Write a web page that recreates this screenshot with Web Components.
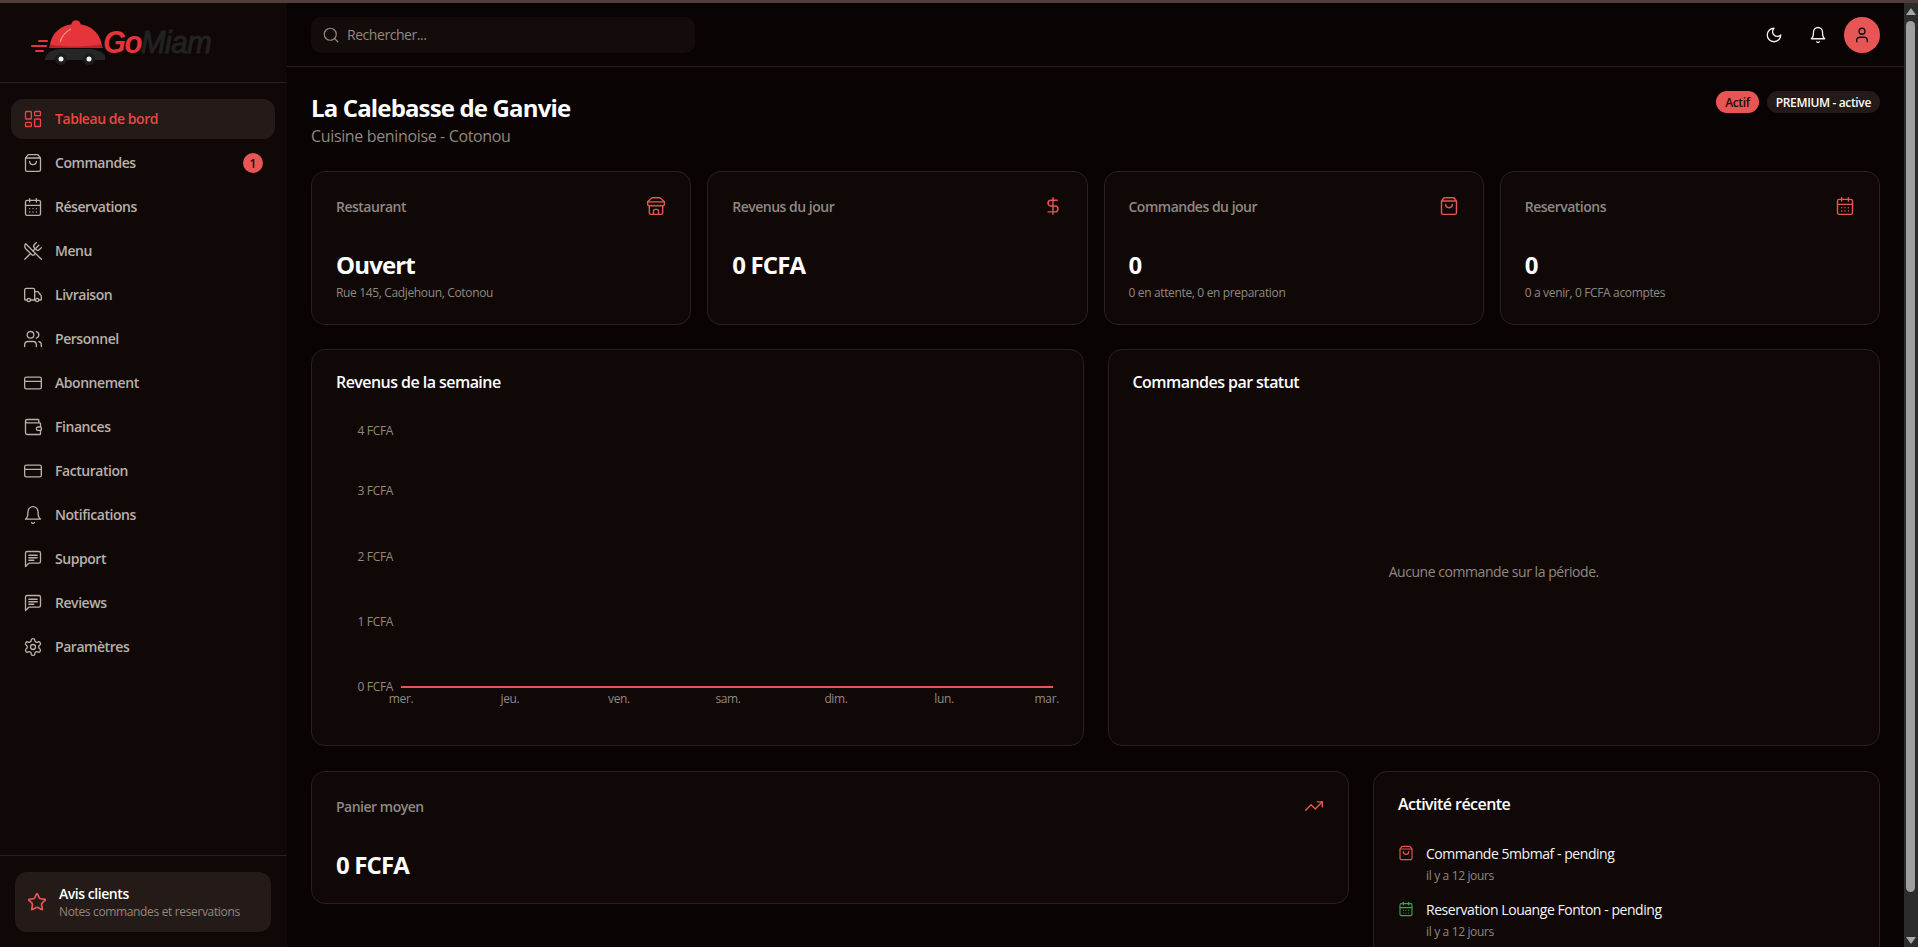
<!DOCTYPE html>
<html lang="fr">
<head>
<meta charset="utf-8">
<title>GoMiam</title>
<style>
  html, body { margin: 0; height: 100%; overflow: hidden; background: #0a0303; }
</style>
</head>
<body>
<app-shell></app-shell>
<script>
const ICONS = {
    dashboard: '<rect x="3" y="3" width="7" height="9" rx="1"/><rect x="14" y="3" width="7" height="5" rx="1"/><rect x="14" y="12" width="7" height="9" rx="1"/><rect x="3" y="16" width="7" height="5" rx="1"/>',
    bag: '<path d="M16 10a4 4 0 0 1-8 0"/><path d="M3.103 6.034h17.794"/><path d="M3.4 5.467a2 2 0 0 0-.4 1.2V20a2 2 0 0 0 2 2h14a2 2 0 0 0 2-2V6.667a2 2 0 0 0-.4-1.2l-2-2.667A2 2 0 0 0 17 2H7a2 2 0 0 0-1.6.8z"/>',
    calendar: '<path d="M8 2v4"/><path d="M16 2v4"/><rect width="18" height="18" x="3" y="4" rx="2"/><path d="M3 10h18"/><path d="M8 14h.01"/><path d="M12 14h.01"/><path d="M16 14h.01"/><path d="M8 18h.01"/><path d="M12 18h.01"/><path d="M16 18h.01"/>',
    utensils: '<path d="m16 2-2.3 2.3a3 3 0 0 0 0 4.2l1.8 1.8a3 3 0 0 0 4.2 0L22 8"/><path d="M15 15 3.3 3.3a4.2 4.2 0 0 0 0 6l7.3 7.3c.7.7 2 .7 2.8 0L15 15Zm0 0 7 7"/><path d="m2.1 21.8 6.4-6.3"/><path d="m19 5-7 7"/>',
    truck: '<path d="M14 18V6a2 2 0 0 0-2-2H4a2 2 0 0 0-2 2v11a1 1 0 0 0 1 1h2"/><path d="M15 18H9"/><path d="M19 18h2a1 1 0 0 0 1-1v-3.65a1 1 0 0 0-.22-.624l-3.48-4.35A1 1 0 0 0 17.52 8H14"/><circle cx="17" cy="18" r="2"/><circle cx="7" cy="18" r="2"/>',
    users: '<path d="M16 21v-2a4 4 0 0 0-4-4H6a4 4 0 0 0-4 4v2"/><circle cx="9" cy="7" r="4"/><path d="M22 21v-2a4 4 0 0 0-3-3.87"/><path d="M16 3.13a4 4 0 0 1 0 7.75"/>',
    card: '<rect width="20" height="14" x="2" y="5" rx="2"/><line x1="2" x2="22" y1="10" y2="10"/>',
    wallet: '<path d="M19 7V4a1 1 0 0 0-1-1H5a2 2 0 0 0 0 4h15a1 1 0 0 1 1 1v4h-3a2 2 0 0 0 0 4h3a1 1 0 0 0 1-1v-2a1 1 0 0 0-1-1"/><path d="M3 5v14a2 2 0 0 0 2 2h15a1 1 0 0 0 1-1v-4"/>',
    bell: '<path d="M6 8a6 6 0 0 1 12 0c0 7 3 9 3 9H3s3-2 3-9"/><path d="M10.3 21a1.94 1.94 0 0 0 3.4 0"/>',
    message: '<path d="M21 15a2 2 0 0 1-2 2H7l-4 4V5a2 2 0 0 1 2-2h14a2 2 0 0 1 2 2z"/><path d="M17 7.5H7"/><path d="M17 10.5H7"/><path d="M13 13.5H7"/>',
    settings: '<path d="M12.22 2h-.44a2 2 0 0 0-2 2v.18a2 2 0 0 1-1 1.73l-.43.25a2 2 0 0 1-2 0l-.15-.08a2 2 0 0 0-2.73.73l-.22.38a2 2 0 0 0 .73 2.73l.15.1a2 2 0 0 1 1 1.72v.51a2 2 0 0 1-1 1.74l-.15.09a2 2 0 0 0-.73 2.73l.22.38a2 2 0 0 0 2.73.73l.15-.08a2 2 0 0 1 2 0l.43.25a2 2 0 0 1 1 1.73V20a2 2 0 0 0 2 2h.44a2 2 0 0 0 2-2v-.18a2 2 0 0 1 1-1.73l.43-.25a2 2 0 0 1 2 0l.15.08a2 2 0 0 0 2.73-.73l.22-.39a2 2 0 0 0-.73-2.73l-.15-.08a2 2 0 0 1-1-1.74v-.5a2 2 0 0 1 1-1.74l.15-.09a2 2 0 0 0 .73-2.73l-.22-.38a2 2 0 0 0-2.73-.73l-.15.08a2 2 0 0 1-2 0l-.43-.25a2 2 0 0 1-1-1.73V4a2 2 0 0 0-2-2z"/><circle cx="12" cy="12" r="3"/>',
    star: '<path d="M11.525 2.295a.53.53 0 0 1 .95 0l2.31 4.679a2.123 2.123 0 0 0 1.595 1.16l5.166.756a.53.53 0 0 1 .294.904l-3.736 3.638a2.123 2.123 0 0 0-.611 1.878l.882 5.14a.53.53 0 0 1-.771.56l-4.618-2.428a2.122 2.122 0 0 0-1.973 0L6.396 21.01a.53.53 0 0 1-.77-.56l.881-5.139a2.122 2.122 0 0 0-.611-1.879L2.16 9.795a.53.53 0 0 1 .294-.906l5.165-.755a2.122 2.122 0 0 0 1.597-1.16z"/>',
    store: '<path d="m2 7 4.41-4.41A2 2 0 0 1 7.83 2h8.34a2 2 0 0 1 1.42.59L22 7"/><path d="M4 12v8a2 2 0 0 0 2 2h12a2 2 0 0 0 2-2v-8"/><path d="M15 22v-4a2 2 0 0 0-2-2h-2a2 2 0 0 0-2 2v4"/><path d="M2 7h20"/><path d="M22 7v3a2 2 0 0 1-2 2a2.7 2.7 0 0 1-1.59-.63.7.7 0 0 0-.82 0A2.7 2.7 0 0 1 16 12a2.7 2.7 0 0 1-1.59-.63.7.7 0 0 0-.82 0A2.7 2.7 0 0 1 12 12a2.7 2.7 0 0 1-1.59-.63.7.7 0 0 0-.82 0A2.7 2.7 0 0 1 8 12a2.7 2.7 0 0 1-1.59-.63.7.7 0 0 0-.82 0A2.7 2.7 0 0 1 4 12a2 2 0 0 1-2-2V7"/>',
    dollar: '<line x1="12" x2="12" y1="2" y2="22"/><path d="M17 5H9.5a3.5 3.5 0 0 0 0 7h5a3.5 3.5 0 0 1 0 7H6"/>',
    trending: '<path d="M22 7 13.5 15.5 8.5 10.5 2 17"/><path d="M16 7h6v6"/>',
    search: '<circle cx="11" cy="11" r="8"/><path d="m21 21-4.3-4.3"/>',
    moon: '<path d="M12 3a6 6 0 0 0 9 9 9 9 0 1 1-9-9Z"/>',
    user: '<path d="M19 21v-2a4 4 0 0 0-4-4H9a4 4 0 0 0-4 4v2"/><circle cx="12" cy="7" r="4"/>'
};

class AppIcon extends HTMLElement {
    constructor() {
        super();
        this.attachShadow({ mode: 'open' });
    }

    connectedCallback() {
        const size = this.getAttribute('size') || 20;
        const stroke = this.getAttribute('stroke') || 2;
        this.shadowRoot.innerHTML = `
            <style>
                :host { display: inline-flex; flex: none; width: ${size}px; height: ${size}px; }
                svg { display: block; }
            </style>
            <svg width="${size}" height="${size}" viewBox="0 0 24 24" fill="none" stroke="currentColor"
                 stroke-width="${stroke}" stroke-linecap="round" stroke-linejoin="round">${ICONS[this.getAttribute('name')]}</svg>
        `;
    }
}

class AppLogo extends HTMLElement {
    constructor() {
        super();
        this.attachShadow({ mode: 'open' });
        this.shadowRoot.innerHTML = `
            <style>
                :host { display: flex; align-items: flex-start; height: 46px; }
                svg { display: block; flex: none; }
                .word {
                    margin: 4px 0 0 -2px;
                    font: italic 700 32px/36px "Liberation Sans", sans-serif;
                    letter-spacing: -1.6px;
                    transform: scaleX(.92);
                    transform-origin: left center;
                    white-space: nowrap;
                }
                .go { color: #e5343a; }
                .miam { color: #222; font-weight: 400; -webkit-text-stroke: 1px #222; letter-spacing: -.4px; }
            </style>
            <svg width="74" height="46" viewBox="0 0 74 46">
                <path d="M8 21h8M1 26h14M5 31h7" stroke="#e5343a" stroke-width="2" stroke-linecap="round"/>
                <path d="M14 40c0-6 6-11 16-11h28c9 0 16 4 18 11z" fill="#262626"/>
                <circle cx="45" cy="4.8" r="4.6" fill="#e5343a"/>
                <path d="M19 27c0-13 11-23 26-23s25 10 26 23z" fill="#e5343a"/>
                <path d="M19 24.500c18 3 36 2.500 51 0l2 3.500H18z" fill="#b8222a"/>
                <path d="M29 22c2-6 5-10 11-13" fill="none" stroke="#f58a8a" stroke-width="1.3"/>
                <circle cx="30" cy="39" r="6" fill="#1c1c1c"/>
                <circle cx="58" cy="39" r="6" fill="#1c1c1c"/>
                <circle cx="30" cy="39" r="2.500" fill="#f4f4f4"/>
                <circle cx="58" cy="39" r="2.500" fill="#f4f4f4"/>
            </svg>
            <div class="word"><span class="go">Go</span><span class="miam">Miam</span></div>
        `;
    }
}

class NavItem extends HTMLElement {
    constructor() {
        super();
        this.attachShadow({ mode: 'open' });
    }

    connectedCallback() {
        const badge = this.getAttribute('badge');
        this.shadowRoot.innerHTML = `
            <style>
                :host {
                    display: flex;
                    align-items: center;
                    gap: 12px;
                    height: 40px;
                    padding: 0 12px;
                    border-radius: 12px;
                    color: #b9b0aa;
                    font-size: 14px;
                    font-weight: 600;
                    letter-spacing: -.45px;
                }
                :host([active]) { background: #241a18; color: #ef4444; }
                .label { flex: 1; margin-top: -1px; }
                .badge {
                    width: 20px;
                    height: 20px;
                    border-radius: 50%;
                    background: #e85555;
                    color: #1a0606;
                    display: flex;
                    justify-content: center;
                    align-items: center;
                    font-size: 12px;
                    letter-spacing: 0;
                }
            </style>
            <app-icon name="${this.getAttribute('icon')}" stroke="1.6"></app-icon>
            <span class="label"><slot></slot></span>
            ${badge ? `<span class="badge">${badge}</span>` : ''}
        `;
    }
}

class SideBar extends HTMLElement {
    constructor() {
        super();
        this.attachShadow({ mode: 'open' });
        const items = [
            ['dashboard', 'Tableau de bord'], ['bag', 'Commandes'], ['calendar', 'Réservations'],
            ['utensils', 'Menu'], ['truck', 'Livraison'], ['users', 'Personnel'], ['card', 'Abonnement'],
            ['wallet', 'Finances'], ['card', 'Facturation'], ['bell', 'Notifications'],
            ['message', 'Support'], ['message', 'Reviews'], ['settings', 'Paramètres']
        ];
        const links = items.map(([icon, label], i) =>
            `<nav-item icon="${icon}"${i === 0 ? ' active' : ''}${i === 1 ? ' badge="1"' : ''}>${label}</nav-item>`).join('');
        this.shadowRoot.innerHTML = `
            <style>
                :host {
                    display: flex;
                    flex-direction: column;
                    flex: none;
                    width: 287px;
                    background: #100807;
                }
                .brand {
                    height: 80px;
                    box-sizing: border-box;
                    padding: 17px 0 0 31px;
                    border-bottom: 1px solid #2a1f1c;
                }
                nav {
                    flex: 1;
                    display: flex;
                    flex-direction: column;
                    gap: 4px;
                    padding: 16px 12px 0 11px;
                }
                .foot {
                    height: 92px;
                    box-sizing: border-box;
                    padding: 16px 16px 0 15px;
                    border-top: 1px solid #2a1f1c;
                }
                .review {
                    height: 60px;
                    box-sizing: border-box;
                    display: flex;
                    align-items: center;
                    gap: 12px;
                    padding: 0 12px;
                    border-radius: 12px;
                    background: #241a18;
                    color: #e85555;
                }
                .title { color: #fff; font-size: 14px; font-weight: 600; line-height: 20px; letter-spacing: -.45px; }
                .sub { color: #918880; font-size: 12px; line-height: 16px; letter-spacing: -.35px; white-space: nowrap; }
            </style>
            <div class="brand"><app-logo></app-logo></div>
            <nav>${links}</nav>
            <div class="foot">
                <div class="review">
                    <app-icon name="star"></app-icon>
                    <div>
                        <div class="title">Avis clients</div>
                        <div class="sub">Notes commandes et reservations</div>
                    </div>
                </div>
            </div>
        `;
    }
}

class TopBar extends HTMLElement {
    constructor() {
        super();
        this.attachShadow({ mode: 'open' });
        this.shadowRoot.innerHTML = `
            <style>
                :host {
                    position: sticky;
                    top: 0;
                    z-index: 5;
                    display: flex;
                    align-items: center;
                    justify-content: space-between;
                    height: 64px;
                    box-sizing: border-box;
                    padding: 0 24px;
                    background: #0a0303;
                    border-bottom: 1px solid #2a1f1c;
                }
                .search {
                    width: 384px;
                    height: 36px;
                    box-sizing: border-box;
                    display: flex;
                    align-items: center;
                    gap: 7px;
                    padding-left: 11px;
                    border-radius: 10px;
                    background: #140c0b;
                    color: #918880;
                    font-size: 14px;
                    letter-spacing: -.45px;
                }
                .tools { display: flex; gap: 8px; }
                .tool {
                    width: 36px;
                    height: 36px;
                    display: flex;
                    justify-content: center;
                    align-items: center;
                    border-radius: 50%;
                    color: #f5f5f5;
                }
                .avatar { background: #e85555; color: #1a0606; }
            </style>
            <div class="search"><app-icon name="search" size="18" stroke="1.6"></app-icon>Rechercher...</div>
            <div class="tools">
                <span class="tool"><app-icon name="moon" size="18" stroke="1.7"></app-icon></span>
                <span class="tool"><app-icon name="bell" size="18" stroke="1.7"></app-icon></span>
                <span class="tool avatar"><app-icon name="user" size="18" stroke="1.7"></app-icon></span>
            </div>
        `;
    }
}

class StatCard extends HTMLElement {
    constructor() {
        super();
        this.attachShadow({ mode: 'open' });
    }

    connectedCallback() {
        const sub = this.getAttribute('sub');
        this.shadowRoot.innerHTML = `
            <style>
                :host {
                    display: block;
                    box-sizing: border-box;
                    padding: 24px 24px 23px;
                    border: 1px solid #2a1f1c;
                    border-radius: 14px;
                    background: #100807;
                }
                .head {
                    display: flex;
                    justify-content: space-between;
                    align-items: center;
                    height: 20px;
                    margin-bottom: 33px;
                    color: #e85555;
                }
                .label { color: #918880; font-size: 14px; font-weight: 600; letter-spacing: -.5px; }
                .value { color: #fff; font-size: 24px; font-weight: 700; line-height: 32px; letter-spacing: -.85px; }
                .sub { color: #918880; font-size: 12px; line-height: 16px; margin-top: 4px; letter-spacing: -.35px; }
            </style>
            <div class="head">
                <span class="label">${this.getAttribute('label')}</span>
                <app-icon name="${this.getAttribute('icon')}" stroke="1.7"></app-icon>
            </div>
            <div class="value">${this.getAttribute('value')}</div>
            ${sub ? `<div class="sub">${sub}</div>` : ''}
        `;
    }
}

class PanelCard extends HTMLElement {
    constructor() {
        super();
        this.attachShadow({ mode: 'open' });
    }

    connectedCallback() {
        this.shadowRoot.innerHTML = `
            <style>
                :host {
                    display: flex;
                    flex-direction: column;
                    box-sizing: border-box;
                    padding: 24px;
                    border: 1px solid #2a1f1c;
                    border-radius: 14px;
                    background: #100807;
                }
                h3 {
                    margin: 0;
                    color: #fff;
                    font-size: 16px;
                    font-weight: 600;
                    line-height: 16px;
                    letter-spacing: -.55px;
                }
            </style>
            <h3>${this.getAttribute('heading')}</h3>
            <slot></slot>
        `;
    }
}

class WeekChart extends HTMLElement {
    constructor() {
        super();
        this.attachShadow({ mode: 'open' });
        const yTicks = [['4 FCFA', 31], ['3 FCFA', 91], ['2 FCFA', 156.5], ['1 FCFA', 221.5], ['0 FCFA', 287]];
        const xTicks = [['mer.', 65, 'middle'], ['jeu.', 174, 'middle'], ['ven.', 283, 'middle'], ['sam.', 392, 'middle'],
            ['dim.', 500, 'middle'], ['lun.', 608, 'middle'], ['mar.', 723, 'end']];
        const left = yTicks.map(([t, y]) => `<text x="57" y="${y}" dy=".35em" text-anchor="end">${t}</text>`).join('');
        const bottom = xTicks.map(([t, x, a]) => `<text x="${x}" y="299" dy=".35em" text-anchor="${a}">${t}</text>`).join('');
        this.shadowRoot.innerHTML = `
            <style>
                :host { display: block; height: 322px; margin-top: 10px; }
                svg { display: block; width: 100%; height: 100%; overflow: visible; }
                text { fill: #918880; font-size: 12px; letter-spacing: -.35px; }
            </style>
            <svg>
                ${left}
                ${bottom}
                <line x1="65" x2="717" y1="287" y2="287" stroke="#e85555" stroke-width="2"/>
            </svg>
        `;
    }
}

class EmptyState extends HTMLElement {
    constructor() {
        super();
        this.attachShadow({ mode: 'open' });
        this.shadowRoot.innerHTML = `
            <style>
                :host {
                    flex: 1;
                    display: flex;
                    justify-content: center;
                    align-items: center;
                    padding-top: 32px;
                    color: #918880;
                    font-size: 14px;
                    letter-spacing: -.45px;
                }
            </style>
            <slot></slot>
        `;
    }
}

class ActivityItem extends HTMLElement {
    constructor() {
        super();
        this.attachShadow({ mode: 'open' });
    }

    connectedCallback() {
        this.shadowRoot.innerHTML = `
            <style>
                :host { display: flex; gap: 12px; align-items: flex-start; height: 40px; }
                app-icon { margin-top: 1px; color: ${this.getAttribute('color')}; }
                .title { color: #f5f5f5; font-size: 14px; line-height: 20px; letter-spacing: -.45px; }
                .time { color: #918880; font-size: 12px; line-height: 16px; margin-top: 4px; letter-spacing: -.35px; }
            </style>
            <app-icon name="${this.getAttribute('icon')}" size="16" stroke="1.7"></app-icon>
            <div>
                <div class="title"><slot></slot></div>
                <div class="time">${this.getAttribute('time')}</div>
            </div>
        `;
    }
}

// headless browser hides real scrollbars, so the page's own one is drawn here
class PageScrollbar extends HTMLElement {
    constructor() {
        super();
        this.attachShadow({ mode: 'open' });
        this.shadowRoot.innerHTML = `
            <style>
                :host {
                    display: flex;
                    flex-direction: column;
                    align-items: center;
                    flex: none;
                    width: 14px;
                    background: #2c2c2c;
                }
                .arrow { flex: none; display: block; }
                .top { margin-top: 5px; }
                .thumb {
                    width: 9px;
                    height: 871px;
                    margin: 6px 1px 0 0;
                    border-radius: 5px;
                    background: #9f9f9f;
                }
                .bottom { margin-top: 45px; }
            </style>
            <svg class="arrow top" width="10" height="7"><path d="M5 0 10 7H0z" fill="#a8a8a8"/></svg>
            <div class="thumb"></div>
            <svg class="arrow bottom" width="10" height="7"><path d="M5 7 10 0H0z" fill="#a8a8a8"/></svg>
        `;
    }
}

class AppShell extends HTMLElement {
    constructor() {
        super();
        this.attachShadow({ mode: 'open' });
        this.shadowRoot.innerHTML = `
            <style>
                :host {
                    display: flex;
                    flex-direction: column;
                    height: 947px;
                    font-family: "Open Sans", "Noto Sans", sans-serif;
                    background: #0a0303;
                }
                .strip { height: 3px; flex: none; background: #523d3d; }
                .frame { flex: 1; display: flex; min-height: 0; }
                .scroller { flex: 1; min-width: 0; overflow: hidden; }
                main { padding: 24px; display: flex; flex-direction: column; }
                .hero { display: flex; justify-content: space-between; align-items: flex-start; margin-bottom: 25px; }
                h1 { margin: -1px 0 0; color: #fff; font-size: 24px; font-weight: 700; line-height: 36px; letter-spacing: -.85px; }
                .hero p { margin: 0; color: #918880; font-size: 16px; line-height: 20px; letter-spacing: -.35px; }
                .badges { display: flex; gap: 8px; }
                .pill {
                    height: 22px;
                    display: flex;
                    align-items: center;
                    padding: 0 9px;
                    border-radius: 11px;
                    font-size: 12px;
                    font-weight: 600;
                    letter-spacing: -.35px;
                }
                .pill.on { background: #e85555; color: #2a0808; }
                .pill.plan { background: #241a18; color: #fff; }
                .stats { display: grid; grid-template-columns: repeat(4, 1fr); gap: 16px; margin-bottom: 24px; }
                .charts { display: grid; grid-template-columns: 1fr 1fr; gap: 24px; margin-bottom: 25px; }
                .charts panel-card { height: 397px; }
                .bottom { display: grid; grid-template-columns: repeat(3, 1fr); gap: 24px; align-items: start; }
                .bottom stat-card { grid-column: span 2; height: 133px; }
                .list { display: flex; flex-direction: column; gap: 16px; margin-top: 32px; }
            </style>
            <div class="strip"></div>
            <div class="frame">
                <side-bar></side-bar>
                <div class="scroller">
                    <top-bar></top-bar>
                    <main>
                        <section class="hero">
                            <div>
                                <h1>La Calebasse de Ganvie</h1>
                                <p>Cuisine beninoise - Cotonou</p>
                            </div>
                            <div class="badges">
                                <span class="pill on">Actif</span>
                                <span class="pill plan">PREMIUM - active</span>
                            </div>
                        </section>
                        <section class="stats">
                            <stat-card label="Restaurant" icon="store" value="Ouvert" sub="Rue 145, Cadjehoun, Cotonou"></stat-card>
                            <stat-card label="Revenus du jour" icon="dollar" value="0 FCFA"></stat-card>
                            <stat-card label="Commandes du jour" icon="bag" value="0" sub="0 en attente, 0 en preparation"></stat-card>
                            <stat-card label="Reservations" icon="calendar" value="0" sub="0 a venir, 0 FCFA acomptes"></stat-card>
                        </section>
                        <section class="charts">
                            <panel-card heading="Revenus de la semaine"><week-chart></week-chart></panel-card>
                            <panel-card heading="Commandes par statut"><empty-state>Aucune commande sur la période.</empty-state></panel-card>
                        </section>
                        <section class="bottom">
                            <stat-card label="Panier moyen" icon="trending" value="0 FCFA"></stat-card>
                            <panel-card heading="Activité récente">
                                <div class="list">
                                    <activity-item icon="bag" color="#e85555" time="il y a 12 jours">Commande 5mbmaf - pending</activity-item>
                                    <activity-item icon="calendar" color="#3fa34d" time="il y a 12 jours">Reservation Louange Fonton - pending</activity-item>
                                </div>
                            </panel-card>
                        </section>
                    </main>
                </div>
                <page-scrollbar></page-scrollbar>
            </div>
        `;
    }
}

customElements.define('app-icon', AppIcon);
customElements.define('app-logo', AppLogo);
customElements.define('nav-item', NavItem);
customElements.define('side-bar', SideBar);
customElements.define('top-bar', TopBar);
customElements.define('stat-card', StatCard);
customElements.define('panel-card', PanelCard);
customElements.define('week-chart', WeekChart);
customElements.define('empty-state', EmptyState);
customElements.define('activity-item', ActivityItem);
customElements.define('page-scrollbar', PageScrollbar);
customElements.define('app-shell', AppShell);
</script>
</body>
</html>
